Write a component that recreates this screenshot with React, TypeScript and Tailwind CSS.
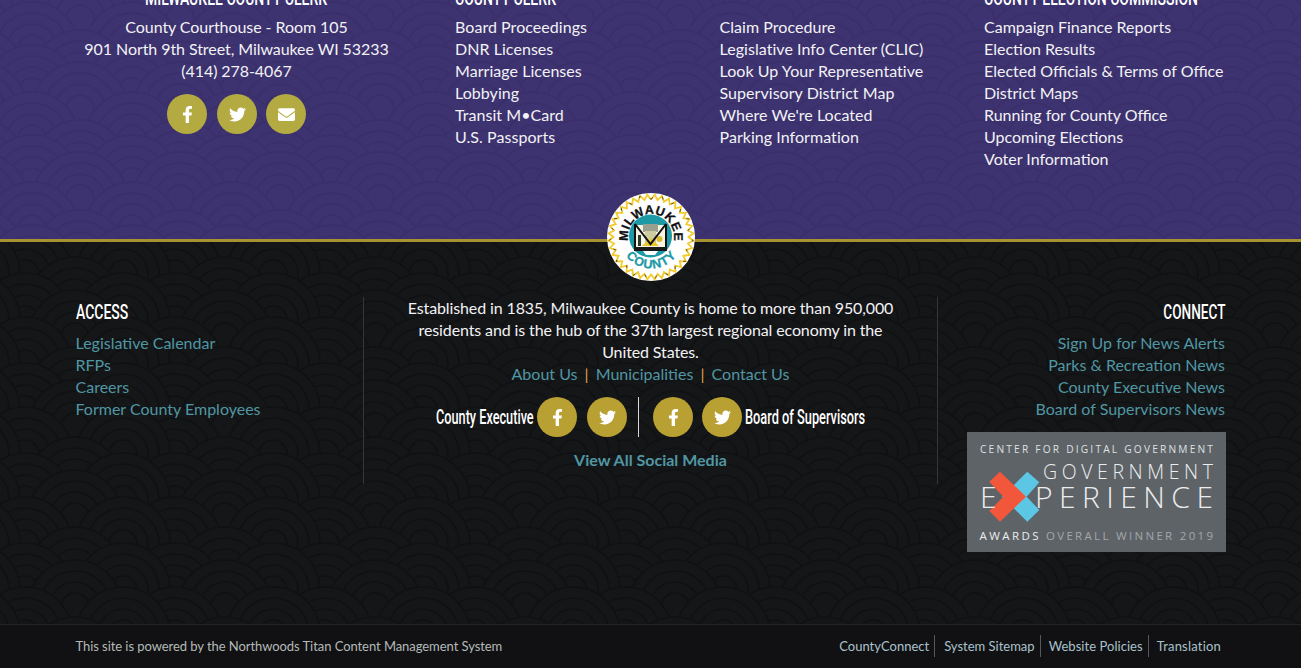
import React from "react";
import { FaFacebookF, FaTwitter, FaEnvelope } from "react-icons/fa";

type S = { x: number; t: number };

function build(list: S[], tw: number): S[] {
  const all: S[] = [];
  for (const dy of [-90, 0, 90]) for (const s of list) for (const dx of [-tw, 0, tw]) all.push({ x: s.x + dx, t: s.t + dy });
  return all.sort((a, b) => a.t - b.t);
}
const BLACK = build([{ x: 25, t: 0 }, { x: 123, t: 0 }, { x: 75, t: 30 }, { x: 25, t: 46 }, { x: 123, t: 46 }, { x: 75, t: 63 }], 150);
const PURPLE = build([{ x: 32, t: 0 }, { x: 80, t: 17 }, { x: 32, t: 47 }, { x: 80, t: 75 }], 100);

function Pattern({ id, bg, line, y, tw, list }: { id: string; bg: string; line: string; y: number; tw: number; list: S[] }) {
  return (
    <svg className="absolute inset-0 w-full h-full" aria-hidden="true">
      <defs>
        <pattern id={id} patternUnits="userSpaceOnUse" width={tw} height="90" x="0" y={y}>
          {list.map((s, i) => (
            <g key={i} fill={bg} stroke={line} strokeWidth="2.2">
              {[47, 36, 25, 14].map((r) => (
                <circle key={r} cx={s.x} cy={s.t + 47} r={r} />
              ))}
            </g>
          ))}
        </pattern>
      </defs>
      <rect width="100%" height="100%" fill={`url(#${id})`} />
    </svg>
  );
}

function Head({ children, cls = "scale-x-[0.7] origin-left" }: { children: React.ReactNode; cls?: string }) {
  return (
    <span className={`inline-block w-max whitespace-nowrap font-['Roboto',sans-serif] font-medium text-[20px] leading-[28px] text-white ${cls}`}>
      {children}
    </span>
  );
}

function Round({ children, cls }: { children: React.ReactNode; cls: string }) {
  return <a className={`flex w-10 h-10 shrink-0 items-center justify-center rounded-full text-white text-[17px] ${cls}`}>{children}</a>;
}

function Logo() {
  const N = 72;
  let zig = "";
  for (let i = 0; i <= N; i++) {
    const a = (i / N) * Math.PI * 2;
    const r = i % 2 ? 42.5 : 37.5;
    zig += `${i ? "L" : "M"}${(44 + r * Math.sin(a)).toFixed(2)} ${(44 - r * Math.cos(a)).toFixed(2)}`;
  }
  return (
    <svg viewBox="0 0 88 88" className="absolute left-[607px] top-[193px] w-[88px] h-[88px]">
      <circle cx="44" cy="44" r="44" fill="#fff" />
      <path d={zig} fill="none" stroke="#f2cb2e" strokeWidth="1.8" />
      <path d={zig} fill="none" stroke="#222" strokeWidth="0.7" strokeDasharray="3 16" />
      <circle cx="43.5" cy="43" r="21.5" fill="#1d9aa6" />
      <path d="M28 32 H59 V50 Q59 56 52 57 H35 Q28 56 28 50 Z" fill="#f7f4e4" />
      <rect x="36" y="31" width="15" height="8" fill="#9aa08f" />
      <rect x="38" y="38" width="11" height="12" fill="#cfcba0" />
      <path d="M35 53 L43.5 45 L52 53 Z" fill="#e9c92a" />
      <circle cx="52.5" cy="46" r="3" fill="#d8bd2a" />
      <rect x="31" y="42" width="3" height="11" fill="#2c3a2c" />
      <path d="M28 31 V54 M28 31 L43.5 51 L59 31 M59 31 V54" fill="none" stroke="#111" strokeWidth="2" />
      <rect x="27" y="54" width="33" height="4" fill="#1a1a1a" />
      <path d="M36 58 H51 L48 62 H39 Z" fill="#fff" />
      <defs>
        <path id="lgTop" d="M21.8 50 A23 23 0 1 1 66.2 50" />
        <path id="lgBot" d="M16.7 59.75 A31.5 31.5 0 0 0 71.3 59.75" />
      </defs>
      <text fontFamily="'Liberation Sans',sans-serif" fontWeight="700" fontSize="12.5" fill="#111" stroke="#111" strokeWidth="0.3">
        <textPath href="#lgTop" startOffset="2" textLength="80" lengthAdjust="spacing">MILWAUKEE</textPath>
      </text>
      <text fontFamily="'Liberation Sans',sans-serif" fontWeight="700" fontSize="12.5" fill="#1d9aa6" stroke="#1d9aa6" strokeWidth="0.3">
        <textPath href="#lgBot" startOffset="4" textLength="58" lengthAdjust="spacing">COUNTY</textPath>
      </text>
    </svg>
  );
}

function Badge() {
  const f = "'Open Sans',sans-serif";
  return (
    <svg viewBox="0 0 259 120" className="block w-[259px] h-[120px] ml-auto mt-[12px]">
      <rect width="259" height="120" fill="#5e6368" />
      <polygon points="60.3,39.7 72.3,50.3 59.7,64.7 72.3,78 60.3,89.7 35,64.7" fill="#5bc7e4" />
      <polygon points="33,39.7 59,64.7 33,89.7 22.3,79 36.3,64.7 22.3,49.7" fill="#f2573b" />
      <g fontFamily={f} fill="#eceded">
        <text x="13" y="21" fontSize="10.2" fontWeight="400" textLength="233" fill="#dfe0e1">CENTER FOR DIGITAL GOVERNMENT</text>
        <text x="76" y="47" fontSize="19.5" fontWeight="300" textLength="170">GOVERNMENT</text>
        <text x="13" y="76" fontSize="30" fontWeight="300" textLength="15">E</text>
        <text x="68" y="76" fontSize="30" fontWeight="300" textLength="178">PERIENCE</text>
        <text x="12.5" y="108" fontSize="11.5" fontWeight="400" textLength="59">AWARDS</text>
        <text x="79" y="108" fontSize="11.5" fontWeight="400" textLength="167" fill="#a3a7aa">OVERALL WINNER 2019</text>
      </g>
    </svg>
  );
}

const teal = "text-[#5097a3]";

export default function App() {
  return (
    <div className="relative w-full h-[668px] overflow-hidden bg-[#151618] font-['Lato',sans-serif] text-[16px] leading-[22px] text-[#f2f2f5]">
      <section className="relative h-[242px] bg-[#3d3370] border-b-[3px] border-[#a8922f]">
        <Pattern id="pPurple" bg="#3d3370" line="#3a2f6b" y={45} tw={100} list={PURPLE} />
        <div className="relative flex pl-[76px]">
          <div className="w-[321px] -mt-[22px] text-center shrink-0">
            <div className="flex justify-center pt-[6px] h-[38px]">
              <Head cls="scale-x-[0.7] origin-center">MILWAUKEE COUNTY CLERK</Head>
            </div>
            <div className="tracking-[-0.07px]">
              <p>County Courthouse - Room 105</p>
              <p>901 North 9th Street, Milwaukee WI 53233</p>
              <p>(414) 278-4067</p>
            </div>
            <div className="mt-[12px] flex pl-[91px]">
              <Round cls="bg-[#b3aa42]"><FaFacebookF /></Round>
              <Round cls="bg-[#b3aa42] ml-[10px]"><FaTwitter /></Round>
              <Round cls="bg-[#b3aa42] ml-[9px]"><FaEnvelope /></Round>
            </div>
          </div>
          <div className="ml-[58px] w-[264.5px] -mt-[22px] shrink-0 tracking-[0.05px]">
            <div className="h-[38px] pt-[6px]"><Head>COUNTY CLERK</Head></div>
            {["Board Proceedings", "DNR Licenses", "Marriage Licenses", "Lobbying", "Transit M•Card", "U.S. Passports"].map((t) => <p key={t}>{t}</p>)}
          </div>
          <div className="w-[264.5px] -mt-[22px] shrink-0 tracking-[0.05px]">
            <div className="h-[38px]" />
            {["Claim Procedure", "Legislative Info Center (CLIC)", "Look Up Your Representative", "Supervisory District Map", "Where We're Located", "Parking Information"].map((t) => <p key={t}>{t}</p>)}
          </div>
          <div className="-mt-[22px] shrink-0">
            <div className="h-[38px] pt-[6px]"><Head>COUNTY ELECTION COMMISSION</Head></div>
            {["Campaign Finance Reports", "Election Results", "Elected Officials & Terms of Office", "District Maps", "Running for County Office", "Upcoming Elections", "Voter Information"].map((t) => <p key={t}>{t}</p>)}
          </div>
        </div>
      </section>

      <section className="relative h-[382px] bg-[#151618]">
        <Pattern id="pBlack" bg="#151618" line="#101113" y={75} tw={150} list={BLACK} />
        <div className="relative flex pt-[55px] pl-[75.5px]">
          <div className="w-[288.5px] h-[187px] border-r border-[#34363a] shrink-0">
            <div className="h-[35px] pt-[1px]"><Head>ACCESS</Head></div>
            {["Legislative Calendar", "RFPs", "Careers", "Former County Employees"].map((t) => <p key={t} className={teal}>{t}</p>)}
          </div>
          <div className="w-[574px] h-[187px] border-r border-[#34363a] shrink-0 text-center">
            <p className="mx-auto w-[510px] tracking-[-0.12px]">Established in 1835, Milwaukee County is home to more than 950,000 residents and is the hub of the 37th largest regional economy in the United States.</p>
            <p className={teal}>
              About Us <span className="text-[#e0a24a] mx-[3px]">|</span> Municipalities <span className="text-[#e0a24a] mx-[3px]">|</span> Contact Us
            </p>
            <div className="mt-[12px] flex items-center pl-[72px]">
              <div className="w-[98px] h-[28px] text-left"><Head cls="scale-x-[0.635] origin-left">County Executive</Head></div>
              <Round cls="bg-[#b9a032] ml-[3px]"><FaFacebookF /></Round>
              <Round cls="bg-[#b9a032] ml-[10px]"><FaTwitter /></Round>
              <div className="w-px h-10 bg-[#d8d8d8] ml-[11px]" />
              <Round cls="bg-[#b9a032] ml-[14px]"><FaFacebookF /></Round>
              <Round cls="bg-[#b9a032] ml-[9px]"><FaTwitter /></Round>
              <div className="ml-[3px] w-[120px] h-[28px] text-left"><Head cls="scale-x-[0.64] origin-left">Board of Supervisors</Head></div>
            </div>
            <p className={`mt-[12px] font-bold ${teal}`}>View All Social Media</p>
          </div>
          <div className="w-[288px] shrink-0 text-right">
            <div className="h-[35px] pt-[1px] flex justify-end pr-[1px]"><Head cls="scale-x-[0.68] origin-right">CONNECT</Head></div>
            <div className="pr-[1px]">
              {["Sign Up for News Alerts", "Parks & Recreation News", "County Executive News", "Board of Supervisors News"].map((t) => <p key={t} className={teal}>{t}</p>)}
            </div>
            <Badge />
          </div>
        </div>
      </section>

      <footer className="h-[44px] border-t border-[#232427] bg-[#111113] flex items-center justify-between pb-[2px] pl-[75.5px] pr-[80px] text-[13px] text-[#b4bab8]">
        <span className="tracking-[-0.06px]">This site is powered by the Northwoods Titan Content Management System</span>
        <div className="flex items-center text-[#a9c2cc]">
          <span className="pr-[5px] border-r border-[#55585c] leading-[22px]">CountyConnect</span>
          <span className="pl-[9px] pr-[5px] border-r border-[#55585c] leading-[22px]">System Sitemap</span>
          <span className="pl-[8px] pr-[5px] border-r border-[#55585c] leading-[22px] tracking-[0.05px]">Website Policies</span>
          <span className="pl-[8px] leading-[22px] tracking-[0.2px]">Translation</span>
        </div>
      </footer>
      <Logo />
    </div>
  );
}
